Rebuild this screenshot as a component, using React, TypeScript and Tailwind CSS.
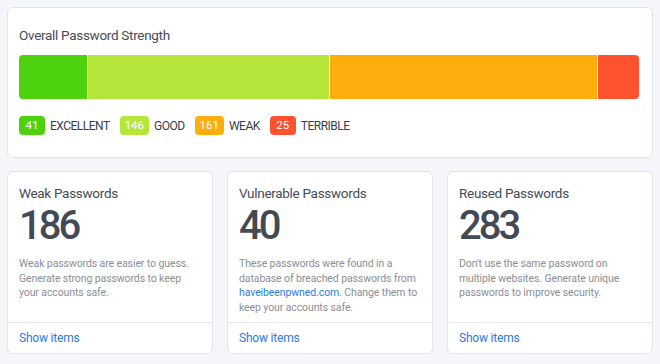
import React from 'react';

const segments = [
  { count: 41, label: 'EXCELLENT', bar: 'bg-[#4fd20e]' },
  { count: 146, label: 'GOOD', bar: 'bg-[#b6e63c]' },
  { count: 161, label: 'WEAK', bar: 'bg-[#fdae0c]' },
  { count: 25, label: 'TERRIBLE', bar: 'bg-[#fe522f]' },
];

const cards = [
  {
    title: 'Weak Passwords',
    value: 186,
    desc: <>Weak passwords are easier to guess. Generate strong passwords to keep your accounts safe.</>,
  },
  {
    title: 'Vulnerable Passwords',
    value: 40,
    desc: (
      <>
        These passwords were found in a database of breached passwords from{' '}
        <a className="text-[#2c7be0]">haveibeenpwned.com</a>. Change them to keep your accounts safe.
      </>
    ),
  },
  {
    title: 'Reused Passwords',
    value: 283,
    desc: <>Don't use the same password on multiple websites. Generate unique passwords to improve security.</>,
  },
];

const App = () => {
  return (
    <div className="w-[660px] h-[364px] bg-[#f4f6f9] px-[7px] pt-[7px] font-['Roboto',sans-serif] text-[#3f4752]">
      <div className="bg-white border border-[#e1e4e9] rounded-[6px] h-[151px] pl-[11px] pr-[13px] pt-[17px]">
        <h2 className="text-[13.5px] leading-[20px] tracking-[-0.3px] text-[#454c56]">Overall Password Strength</h2>
        <div className="flex gap-px mt-[10px] h-[44px] rounded-[4px] overflow-hidden">
          {segments.map((s) => (
            <div key={s.label} className={s.bar} style={{ flexGrow: s.count, flexBasis: 0 }} />
          ))}
        </div>
        <div className="flex items-center gap-[10px] mt-[17px]">
          {segments.map((s) => (
            <div key={s.label} className="flex items-center gap-[5px]">
              <span className={`${s.bar} text-white text-[11.5px] leading-[19px] h-[19px] px-[5px] rounded-[4px] min-w-[26px] text-center`}>
                {s.count}
              </span>
              <span className="text-[12px] tracking-[-0.5px] text-[#3a4048]">{s.label}</span>
            </div>
          ))}
        </div>
      </div>
      <div className="grid grid-cols-3 gap-[14px] mt-[13px]">
        {cards.map((c) => (
          <div key={c.title} className="bg-white border border-[#e1e4e9] rounded-[6px] h-[183px] flex flex-col">
            <div className="flex-1 px-[11px] pt-[11px]">
              <h3 className="text-[13.5px] leading-[20px] tracking-[-0.3px] text-[#454c56]">{c.title}</h3>
              <div className="text-[40px] leading-[44px] font-medium tracking-[-3px] text-[#434a55] mt-[1px]">{c.value}</div>
              <p className="text-[10.5px] leading-[14.5px] tracking-[-0.1px] text-[#8a8f96] mt-[9px]">{c.desc}</p>
            </div>
            <div className="border-t border-[#e6e8ec] h-[31px] px-[11px] flex items-center">
              <a className="text-[12px] tracking-[-0.2px] text-[#2c7be0]">Show items</a>
            </div>
          </div>
        ))}
      </div>
    </div>
  );
};

export default App;
